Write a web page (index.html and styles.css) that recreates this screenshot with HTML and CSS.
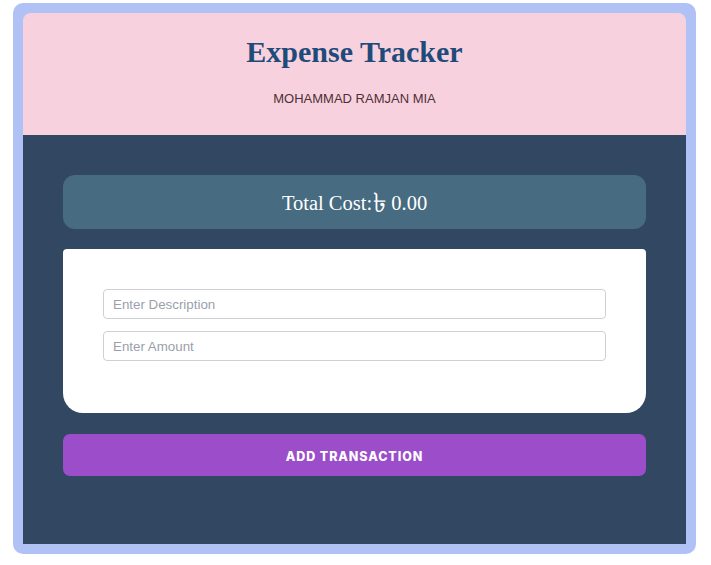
FILE: index.html
```html
<!DOCTYPE html>
<html lang="en">
<head>
<meta charset="UTF-8">
<title>Expense Tracker</title>
<link rel="stylesheet" href="styles.css">
</head>
<body>
<div class="container">
  <header class="header">
    <h1 class="title">Expense Tracker</h1>
    <p class="author">MOHAMMAD RAMJAN MIA</p>
  </header>
  <main class="main">
    <div class="total">Total Cost:<span class="currency">৳</span>&nbsp;0.00</div>
    <form class="card">
      <input class="field" type="text" placeholder="Enter Description">
      <input class="field" type="number" placeholder="Enter Amount">
    </form>
    <button class="add-btn" type="button">ADD TRANSACTION</button>
  </main>
</div>
</body>
</html>
```
FILE: styles.css
```css
* { box-sizing: border-box; }
html, body { margin: 0; padding: 0; background: #ffffff; }
body { font-family: "Liberation Sans", Arial, sans-serif; }

.container {
  width: 683px;
  margin: 3px 0 0 13px;
  padding: 10px;
  background: #b0c2f5;
  border-radius: 10px;
}

.header {
  background: #f7d2de;
  border-radius: 8px 8px 0 0;
  padding: 21px 20px 28px;
  display: flex;
  flex-direction: column;
  align-items: center;
  gap: 21px;
}

.title {
  margin: 0;
  font-family: "Liberation Serif", "Times New Roman", serif;
  font-weight: 700;
  font-size: 30px;
  line-height: 36px;
  color: #1f4b7b;
}

.author {
  margin: 0;
  font-size: 13px;
  line-height: 16px;
  color: #4e2f35;
}

.main {
  background: #324862;
  padding: 40px 40px 68px;
  display: flex;
  flex-direction: column;
}

.total {
  height: 54px;
  padding-top: 1px;
  background: #476b80;
  border-radius: 12px;
  display: flex;
  align-items: center;
  justify-content: center;
  color: #ffffff;
  font-family: "Liberation Serif", "Times New Roman", serif;
  font-size: 20.5px;
  line-height: 24px;
  white-space: pre;
}

.currency {
  font-size: 27px;
  line-height: 24px;
  padding-left: 1px;
}

.card {
  margin: 20px 0 0;
  background: #ffffff;
  border-radius: 4px 4px 20px 20px;
  padding: 40px 40px 52px;
  display: flex;
  flex-direction: column;
  gap: 12px;
}

.field {
  height: 30px;
  width: 100%;
  border: 1px solid #cfcfd4;
  border-radius: 4px;
  padding: 0 9px;
  font-family: "Liberation Sans", Arial, sans-serif;
  font-size: 13.333px;
  color: #333;
  background: #fff;
  outline: none;
}
.field::placeholder { color: #9a9fab; }
.field::-webkit-outer-spin-button,
.field::-webkit-inner-spin-button { -webkit-appearance: none; margin: 0; }

.add-btn {
  margin-top: 21px;
  height: 42px;
  border: none;
  border-radius: 7px;
  background: #9b4dca;
  color: #ffffff;
  font-family: Inter, "Open Sans", sans-serif;
  font-weight: 800;
  font-size: 12.5px;
  letter-spacing: 0.9px;
  padding-top: 3px;
  cursor: pointer;
}
```
